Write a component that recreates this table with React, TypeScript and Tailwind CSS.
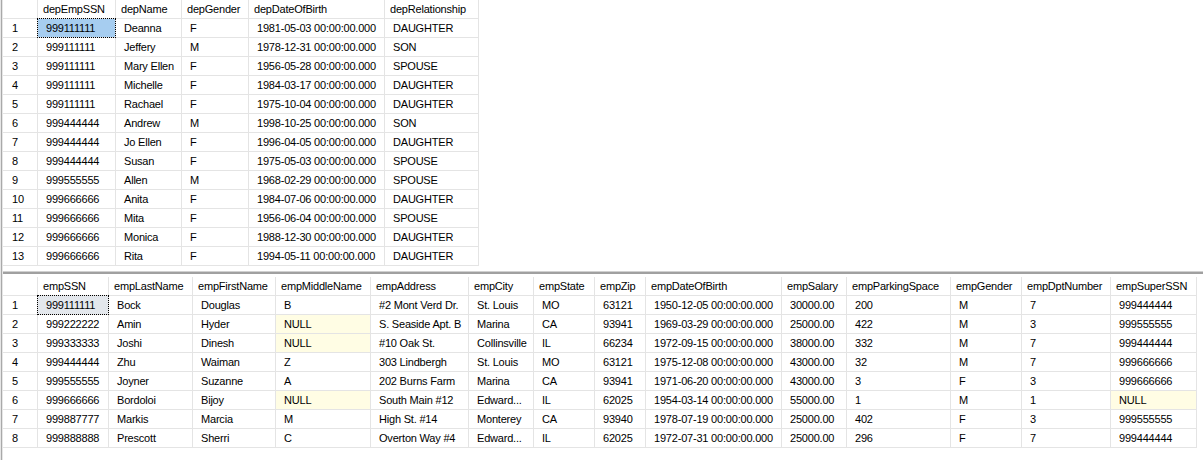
import React from "react";

type Cell = string;

const topCols = [35, 78, 66, 67, 136, 94];
const topHeaders = ["", "depEmpSSN", "depName", "depGender", "depDateOfBirth", "depRelationship"];
const topRows: Cell[][] = [
  ["999111111", "Deanna", "F", "1981-05-03 00:00:00.000", "DAUGHTER"],
  ["999111111", "Jeffery", "M", "1978-12-31 00:00:00.000", "SON"],
  ["999111111", "Mary Ellen", "F", "1956-05-28 00:00:00.000", "SPOUSE"],
  ["999111111", "Michelle", "F", "1984-03-17 00:00:00.000", "DAUGHTER"],
  ["999111111", "Rachael", "F", "1975-10-04 00:00:00.000", "DAUGHTER"],
  ["999444444", "Andrew", "M", "1998-10-25 00:00:00.000", "SON"],
  ["999444444", "Jo Ellen", "F", "1996-04-05 00:00:00.000", "DAUGHTER"],
  ["999444444", "Susan", "F", "1975-05-03 00:00:00.000", "SPOUSE"],
  ["999555555", "Allen", "M", "1968-02-29 00:00:00.000", "SPOUSE"],
  ["999666666", "Anita", "F", "1984-07-06 00:00:00.000", "DAUGHTER"],
  ["999666666", "Mita", "F", "1956-06-04 00:00:00.000", "SPOUSE"],
  ["999666666", "Monica", "F", "1988-12-30 00:00:00.000", "DAUGHTER"],
  ["999666666", "Rita", "F", "1994-05-11 00:00:00.000", "DAUGHTER"],
];

const botCols = [35, 71, 84, 83, 95, 98, 65, 61, 51, 136, 65, 104, 71, 89, 86];
const botHeaders = [
  "", "empSSN", "empLastName", "empFirstName", "empMiddleName", "empAddress", "empCity", "empState",
  "empZip", "empDateOfBirth", "empSalary", "empParkingSpace", "empGender", "empDptNumber", "empSuperSSN",
];
const botRows: Cell[][] = [
  ["999111111", "Bock", "Douglas", "B", "#2 Mont Verd Dr.", "St. Louis", "MO", "63121", "1950-12-05 00:00:00.000", "30000.00", "200", "M", "7", "999444444"],
  ["999222222", "Amin", "Hyder", "NULL", "S. Seaside Apt. B", "Marina", "CA", "93941", "1969-03-29 00:00:00.000", "25000.00", "422", "M", "3", "999555555"],
  ["999333333", "Joshi", "Dinesh", "NULL", "#10 Oak St.", "Collinsville", "IL", "66234", "1972-09-15 00:00:00.000", "38000.00", "332", "M", "7", "999444444"],
  ["999444444", "Zhu", "Waiman", "Z", "303 Lindbergh", "St. Louis", "MO", "63121", "1975-12-08 00:00:00.000", "43000.00", "32", "M", "7", "999666666"],
  ["999555555", "Joyner", "Suzanne", "A", "202 Burns Farm", "Marina", "CA", "93941", "1971-06-20 00:00:00.000", "43000.00", "3", "F", "3", "999666666"],
  ["999666666", "Bordoloi", "Bijoy", "NULL", "South Main #12", "Edward...", "IL", "62025", "1954-03-14 00:00:00.000", "55000.00", "1", "M", "1", "NULL"],
  ["999887777", "Markis", "Marcia", "M", "High St. #14", "Monterey", "CA", "93940", "1978-07-19 00:00:00.000", "25000.00", "402", "F", "3", "999555555"],
  ["999888888", "Prescott", "Sherri", "C", "Overton Way #4", "Edward...", "IL", "62025", "1972-07-31 00:00:00.000", "25000.00", "296", "F", "7", "999444444"],
];

function Grid({
  cols,
  headers,
  rows,
  selected,
}: {
  cols: number[];
  headers: string[];
  rows: Cell[][];
  selected: "active" | "inactive";
}) {
  return (
    <div className="flex">
      <div
        className="grid"
        style={{ gridTemplateColumns: cols.map((c) => `${c}px`).join(" ") }}
      >
        {headers.map((h, i) => (
          <div
            key={"h" + i}
            className="h-[19px] border-r border-b border-[#e4e4e4] pl-[5px] leading-[18px] whitespace-nowrap overflow-hidden"
          >
            {h}
          </div>
        ))}
        {rows.map((r, ri) => (
          <React.Fragment key={ri}>
            <div className="h-[19px] border-r border-b border-[#e4e4e4] pl-[9px] leading-[18px]">
              {ri + 1}
            </div>
            {r.map((c, ci) => {
              const isNull = c === "NULL";
              const isSel = ri === 0 && ci === 0;
              return (
                <div
                  key={ci}
                  className={
                    "relative h-[19px] border-r border-b border-[#e4e4e4] pl-[8px] leading-[18px] whitespace-nowrap overflow-visible " +
                    (isNull ? "bg-[#fffde4] " : "") +
                    (isSel ? (selected === "active" ? "bg-[#a6cdf0] " : "bg-[#e3e7ec] ") : "")
                  }
                >
                  {isSel && (
                    <div className="absolute -top-px -left-px -right-px -bottom-px border border-dotted border-black pointer-events-none" />
                  )}
                  <span className="relative">{c}</span>
                </div>
              );
            })}
          </React.Fragment>
        ))}
      </div>
    </div>
  );
}

export default function App() {
  return (
    <div
      className="w-[1203px] h-[460px] bg-white text-black text-[11px] tracking-[-0.2px] overflow-hidden flex"
      style={{ fontFamily: '"Liberation Sans", Arial, sans-serif' }}
    >
      <div className="w-[3px] flex">
        <div className="w-px bg-[#e6e6e6]" />
        <div className="w-px bg-[#a9a9a9]" />
        <div className="w-px bg-[#e6e6e6]" />
      </div>
      <div className="flex-1 flex flex-col">
        <Grid cols={topCols} headers={topHeaders} rows={topRows} selected="active" />
        <div className="h-[5px]" />
        <div className="h-px bg-[#d0d0d0]" />
        <div className="h-[2px] bg-[#a0a0a0]" />
        <div className="h-[3px] bg-[#ffffff]" />
        <Grid cols={botCols} headers={botHeaders} rows={botRows} selected="inactive" />
      </div>
    </div>
  );
}
